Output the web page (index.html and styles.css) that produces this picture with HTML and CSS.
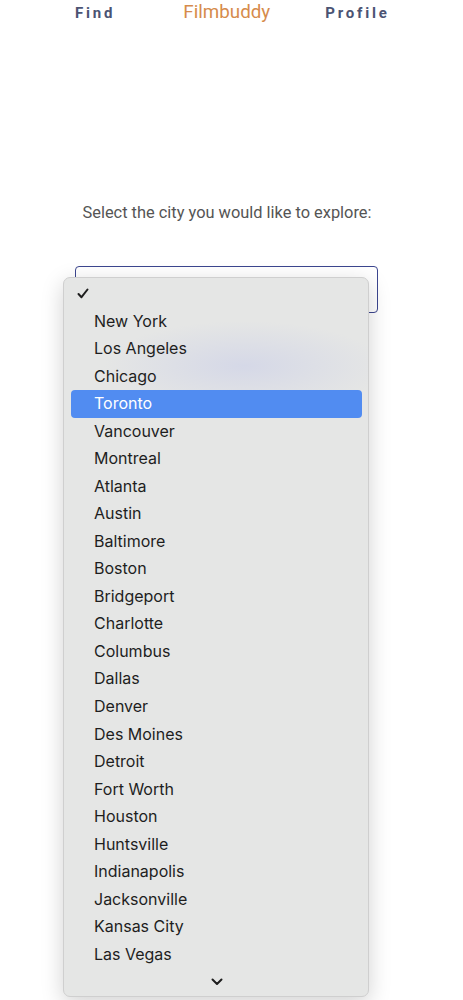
FILE: index.html
```html
<!DOCTYPE html>
<html lang="en">
<head>
    <meta charset="UTF-8">
    <meta name="viewport" content="width=device-width, initial-scale=1.0">
    <title>Filmbuddy</title>
    <link rel="stylesheet" href="styles.css">
</head>
<body>
    <nav class="nav">
        <a class="nav-link" href="#">Find</a>
        <a class="brand" href="#">Filmbuddy</a>
        <a class="nav-link" href="#">Profile</a>
    </nav>

    <main class="explore">
        <p class="prompt">Select the city you would like to explore:</p>

        <div class="picker">
            <div class="select-box">
                <svg class="select-arrow" width="10" height="10" viewBox="0 0 10 10"><path d="M2 8 L8 2" stroke="#777" stroke-width="1.2" fill="none"/></svg>
            </div>

            <ul class="menu">
                <li class="menu-item checked">
                    <svg class="check" width="12" height="11" viewBox="0 0 12 11"><path d="M1.5 6 L4.5 9.2 L10.5 1.5" stroke="#1e1e1e" stroke-width="2" fill="none" stroke-linecap="round" stroke-linejoin="round"/></svg>
                </li>
                <li class="menu-item">New York</li>
                <li class="menu-item">Los Angeles</li>
                <li class="menu-item">Chicago</li>
                <li class="menu-item active">Toronto</li>
                <li class="menu-item">Vancouver</li>
                <li class="menu-item">Montreal</li>
                <li class="menu-item">Atlanta</li>
                <li class="menu-item">Austin</li>
                <li class="menu-item">Baltimore</li>
                <li class="menu-item">Boston</li>
                <li class="menu-item">Bridgeport</li>
                <li class="menu-item">Charlotte</li>
                <li class="menu-item">Columbus</li>
                <li class="menu-item">Dallas</li>
                <li class="menu-item">Denver</li>
                <li class="menu-item">Des Moines</li>
                <li class="menu-item">Detroit</li>
                <li class="menu-item">Fort Worth</li>
                <li class="menu-item">Houston</li>
                <li class="menu-item">Huntsville</li>
                <li class="menu-item">Indianapolis</li>
                <li class="menu-item">Jacksonville</li>
                <li class="menu-item">Kansas City</li>
                <li class="menu-item">Las Vegas</li>
                <li class="menu-more">
                    <svg width="12" height="8" viewBox="0 0 12 8"><path d="M1.5 1.5 L6 6 L10.5 1.5" stroke="#1e1e1e" stroke-width="2" fill="none" stroke-linecap="round" stroke-linejoin="round"/></svg>
                </li>
            </ul>
        </div>
    </main>
</body>
</html>
```

FILE: styles.css
```css
body {
    margin: 0;
    font-family: Roboto, "Liberation Sans", sans-serif;
    background-color: #fff;
    height: 1000px;
    overflow: hidden;
}

.nav {
    display: flex;
    align-items: baseline;
    padding: 1px 0 0 75px;
}

.nav-link {
    color: #4b5373;
    font-size: 15px;
    font-weight: bold;
    letter-spacing: 2.8px;
    text-decoration: none;
}

.brand {
    color: #d68b4c;
    font-size: 18.8px;
    text-decoration: none;
    margin: 0 55px 0 68px;
}

.explore {
    display: flex;
    flex-direction: column;
    align-items: center;
}

.prompt {
    margin: 180px 9px 0 0;
    color: #555;
    font-size: 16.4px;
}

.picker {
    position: relative;
    margin-top: 44px;
    margin-left: -10px;
}

.select-box {
    width: 301px;
    height: 45px;
    border: 1.5px solid #3c468f;
    border-radius: 4px;
    position: relative;
}

.select-arrow {
    position: absolute;
    right: 8px;
    top: 16px;
}

.menu {
    position: absolute;
    left: -12px;
    top: 11px;
    width: 306px;
    height: 720px;
    box-sizing: border-box;
    margin: 0;
    padding: 2px 6px 0 7px;
    list-style: none;
    background-color: #e5e6e5;
    background-image: radial-gradient(ellipse 140px 45px at 180px 88px, #d5d8e7 0%, rgba(229, 230, 229, 0) 100%);
    border: 1px solid #cfcfcf;
    border-radius: 7px;
    box-shadow: 0 6px 22px rgba(0, 0, 0, 0.18);
    font-family: Inter, "Liberation Sans", sans-serif;
    font-size: 16px;
    color: #1e1e1e;
}

.menu-item {
    height: 27.54px;
    line-height: 27.54px;
    padding-left: 23px;
    border-radius: 4px;
}

.menu-item.checked {
    padding-left: 6px;
    display: flex;
    align-items: center;
}

.menu-item.active {
    background-color: #518cf1;
    color: #fff;
}

.menu-more {
    height: 27px;
    display: flex;
    justify-content: center;
    align-items: center;
}
```
